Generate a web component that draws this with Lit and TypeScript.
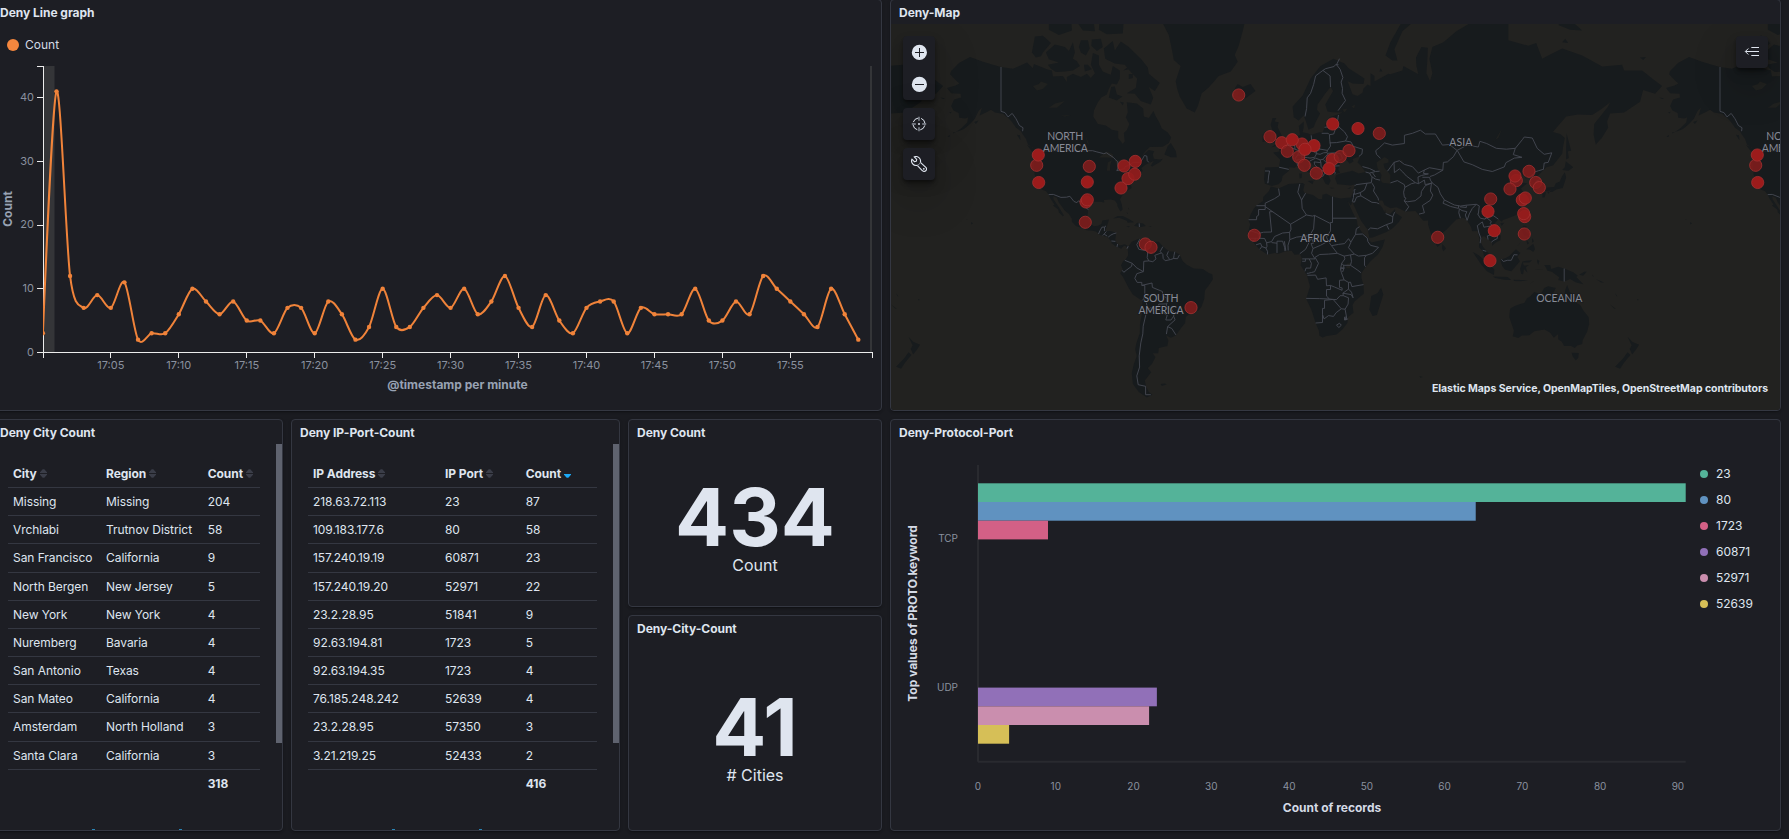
import { LitElement, html, css, svg } from "lit";
import { customElement, property } from "lit/decorators.js";

const FONT = css`Inter, "Open Sans", "Liberation Sans", sans-serif`;

/* ---------- Panel frame ---------- */

@customElement("dash-panel")
class DashPanel extends LitElement {
  @property() heading = "";
  static styles = css`
    :host {
      display: flex;
      flex-direction: column;
      box-sizing: border-box;
      min-width: 0;
      min-height: 0;
      overflow: hidden;
      background: #1d1e24;
      border: 1px solid #343741;
      border-radius: 4px;
      box-shadow: 0 2px 2px -1px rgba(0, 0, 0, 0.3), 0 1px 5px -2px rgba(0, 0, 0, 0.3);
    }
    .title {
      flex: none;
      box-sizing: border-box;
      height: 24px;
      padding: 1px 8px 0;
      font-size: 12px;
      font-weight: 700;
      line-height: 24px;
      letter-spacing: -0.03px;
      color: #dfe5ef;
      white-space: nowrap;
    }
    .body {
      flex: 1;
      min-height: 0;
      display: flex;
      flex-direction: column;
      overflow: hidden;
    }
  `;
  render() {
    return html`<div class="title">${this.heading}</div>
      <div class="body"><slot></slot></div>`;
  }
}

/* ---------- Line chart ---------- */

const COUNTS = [
  3, 41, 12, 7, 9, 7, 11, 2, 3, 3, 6, 10, 8, 6, 8, 5, 5, 3, 7, 7, 3, 8, 6, 2, 4, 10, 4, 4, 7, 9, 7,
  10, 6, 8, 12, 7, 4, 9, 5, 3, 7, 8, 8, 3, 7, 6, 6, 6, 10, 5, 5, 8, 6, 12, 10, 8, 6, 4, 10, 6, 2,
];

@customElement("line-chart")
class LineChart extends LitElement {
  static styles = css`
    :host { display: flex; flex-direction: column; flex: 1; }
    .legend {
      display: flex;
      align-items: center;
      gap: 6px;
      height: 27px;
      padding: 7px 0 0 15px;
      font-size: 12px;
      color: #d4dae5;
    }
    .dot { width: 12px; height: 12px; border-radius: 50%; background: #f5873e; }
    svg { display: block; width: 889px; height: 352px; }
    .tick { font-size: 11px; fill: #8a919f; }
    .axis-title { font-size: 12px; font-weight: 700; fill: #98a2b3; text-anchor: middle; }
    .mid { text-anchor: middle; }
    .end { text-anchor: end; }
    .axis { fill: none; stroke: #ececec; shape-rendering: crispEdges; }
    .series { fill: none; stroke: #f0833a; stroke-width: 2; }
    .point { fill: #f0833a; }
    .edge { fill: #343538; }
  `;
  private x = (i: number) => 42.9 + i * 13.59;
  private y = (v: number) => 352.4 - v * 6.367;

  private path() {
    const p = COUNTS.map((v, i) => [this.x(i), this.y(v)]);
    const a = 0.15;
    const t = p.map((_, i) =>
      i === 0 || i === p.length - 1
        ? [0, 0]
        : [a * (p[i + 1][0] - p[i - 1][0]), a * (p[i + 1][1] - p[i - 1][1])]
    );
    let d = `M${p[0]}`;
    for (let i = 1; i < p.length; i++) {
      const c1 = [p[i - 1][0] + t[i - 1][0], p[i - 1][1] + t[i - 1][1]];
      const c2 = [p[i][0] - t[i][0], p[i][1] - t[i][1]];
      d += `C${c1} ${c2} ${p[i]}`;
    }
    return d;
  }

  render() {
    const yTicks = [0, 10, 20, 30, 40];
    const xTicks = Array.from({ length: 11 }, (_, i) => (i + 1) * 5);
    const axis =
      "M37 66.5H43.5V358M37 352.5H872.5V358" +
      yTicks.map((v) => `M37 ${Math.floor(this.y(v)) + 0.5}H43`).join("") +
      xTicks.map((m) => `M${Math.floor(this.x(m)) + 0.5} 353V358`).join("");
    return html`
      <div class="legend"><span class="dot"></span>Count</div>
      <svg viewBox="-8 58 889 352">
        <clipPath id="plot"><rect x="43" y="60" width="829" height="298" /></clipPath>
        <rect class="edge" x="44" y="66" width="10.5" height="286" />
        <rect class="edge" x="870" y="66" width="2" height="286" />
        <path class="axis" d=${axis} />
        <g clip-path="url(#plot)">
          <path class="series" d=${this.path()} />
          ${COUNTS.map((v, i) => svg`<circle class="point" cx=${this.x(i)} cy=${this.y(v)} r="2.2" />`)}
        </g>
        ${yTicks.map((v) => svg`<text class="tick end" x="34" y=${this.y(v) + 3.2}>${v}</text>`)}
        ${xTicks.map(
          (m) => svg`<text class="tick mid" x=${this.x(m)} y="369">17:${String(m).padStart(2, "0")}</text>`
        )}
        <text class="axis-title" x="457.5" y="389">@timestamp per minute</text>
        <text class="axis-title" transform="translate(12 209) rotate(-90)">Count</text>
      </svg>
    `;
  }
}

/* ---------- World map ---------- */

const WORLD = 719;
const R = WORLD / (2 * Math.PI);
const px = (lon: number) => 1282.6 + (lon * WORLD) / 360;
const py = (lat: number) => 263.3 - R * Math.log(Math.tan(Math.PI / 4 + (lat * Math.PI) / 360));
const trace = (s: string, close: boolean) =>
  "M" +
  s
    .trim()
    .split(/\s+/)
    .map((c) => {
      const [lon, lat] = c.split(",").map(Number);
      return `${px(lon).toFixed(1)} ${py(lat).toFixed(1)}`;
    })
    .join("L") +
  (close ? "Z" : "");

const LAND = [
  // North America
  `-141,69.6 -145,70 -150,70.5 -156.5,71.3 -162,70.3 -166,68.9 -166.5,68.3 -163.5,67.1 -161.8,66.5 -163.8,66.1
  -168,65.6 -166,64.5 -161.2,64.4 -161,63.6 -164.5,63.1 -166,61.6 -164.8,60.5 -162.2,59.9 -161.9,58.7 -158.8,58.5
  -157.5,58.8 -157.8,57.5 -160.5,56 -163,55 -165,54.3 -165,54.6 -162,55.1 -159.5,55.6 -156.5,57 -154,58.5
  -153.3,59.3 -152,60.6 -150.5,61.2 -151.7,59.3 -148.5,60 -146,60.7 -144,60 -140,59.7 -137,58.4 -135.5,57.6
  -133.5,56 -131,55 -130,54 -128.5,52.8 -127.5,51 -124,49.4 -122.7,49 -122.4,47.5 -124.7,48.3 -124.1,46.2
  -124.5,42.8 -124.1,40.5 -123,38.3 -121.9,36.7 -120.6,34.6 -118.4,33.9 -117.2,32.6 -116,30.5 -114.2,28.2 -115,27.8
  -112.3,26 -112,24.6 -110,22.9 -109.5,23.3 -111,25.5 -112.6,27.8 -114.7,30.5 -114.8,31.8 -113,31.2 -112,29
  -110.5,27.3 -109.3,25.8 -107,24 -105.5,21.8 -105.5,20.4 -103.5,18.3 -101,17.5 -98,16.3 -95,16.1 -93.5,15.7
  -91.5,14 -88,13.2 -87.5,12.8 -85.8,11 -85.6,10 -83.6,8.5 -82.5,8.2 -80.8,7.3 -80,8.3 -78.9,8.9 -78,8 -77.5,7
  -76.8,8.3 -79,9.5 -81.5,8.9 -83,10 -83.8,11.5 -83.4,14.5 -83.2,15.1 -86,15.9 -88.8,15.8 -88.2,17.5 -87.5,19.5
  -86.9,21.4 -90.3,21 -90.7,19.3 -92.5,18.5 -94.5,18.2 -96,19.2 -97.4,21 -97.8,22.8 -97.3,26 -97,28 -94.7,29.4
  -91.5,29.4 -89.2,29.1 -89.5,30.2 -86,30.4 -84,30 -82.7,28.5 -82.7,27.5 -81.8,26 -81,25.2 -80.1,26 -80.5,28.2
  -81.4,30.5 -80,32.5 -77.9,34 -75.6,35.3 -76,37 -75,38.5 -74,40.5 -71,41.5 -70,41.8 -70.8,43 -68.5,44.3
  -66.5,44.9 -64.5,45.6 -66,43.8 -65.3,43.5 -61,45.3 -60,46.3 -61.5,46 -64.5,46.3 -65,47.8 -64.3,48.8 -67,49.2
  -69.8,47.6 -71,46.9 -68.5,49 -66.5,50.2 -60,50.3 -57,51.5 -55.8,53.2 -57.5,54.6 -60.5,55.8 -61.8,57.5
  -63.5,59 -64.7,60.4 -67,58.6 -69.5,59 -69.8,61 -73,62.2 -78,62.5 -77.5,60 -78.5,58.8 -76.7,57 -78,55.3
  -79.5,54.5 -79,52 -80,51.2 -82.3,53 -82.3,55.1 -85.5,55.4 -88.5,56.6 -92.5,57 -94.8,59 -94.5,60.5 -92.5,62.5
  -90.8,63.6 -88,64.2 -87,65.4 -85.5,66.5 -83,66.3 -81.5,67.5 -81.5,69 -85,69.8 -86,68.2 -88,68.5 -90,68.8 -92,70
  -92,71.5 -95,71.9 -96,70 -94,68.5 -96,67.6 -98,68.4 -101,67.8 -105,68.4 -108,67.8 -108,66.8 -110,68 -115,67.9 -115.5,69 -118,69.2 -122,69.8 -124.5,70.1 -125,69.4 -128,70.4
  -131,69.9 -135,69.3`,
  `-105,73.5 -107,72.2 -109,72.8 -114,73.2 -118.5,72 -117,70.9 -112,70.4 -117.5,70 -116,69.3 -113.5,68.7 -109,68.8 -105,69 -101.5,69.8 -103,70.6 -105,71 -104,72`,
  `-125.5,72 -124,74.3 -120,74.4 -116,73.4 -120,72 -121,71.4 -123.5,71.2`,
  `-102,72.8 -101,73.8 -97.5,73.8 -96.6,72.6 -98.5,71.5 -101,72`, `-95.5,73.9 -91,74 -90,72.8 -93,72.2 -95.8,73`,
  `-99.5,70 -97.5,70 -95.5,69.2 -99,68.8`,
  `-61.5,66.6 -64,65 -67,65.8 -64.8,63.5 -66,62 -71,62.8 -74,64.4 -78,64.5 -73.5,65.6 -72.8,67.5 -76,68.7 -79,70
  -84,70.2 -88.8,71 -89.5,72.6 -85,73.7 -84,72.3 -81,73.6 -77,72.8 -71,71 -67.5,69.5 -67,68.4`,
  `-80,74.7 -88,74.6 -92,75.2 -91.5,77 -79.5,76.5`, `-105.5,75.1 -112,74.5 -117,75.2 -117,77 -106,77`,
  `-94,75 -100,75.1 -104,76.5 -104,77 -95,77`, `-80.2,63.8 -83,64.2 -84,65.9 -85.8,65.8 -87,63.6 -83,62.9`, `-79.5,62.4 -81.5,62.6 -80,61.8`,
  `-75,67.6 -77,67.4 -77,68.3 -75,68.4`, `-79.8,69 -77.5,69.6 -77,69.2`, `-59.2,47.7 -56,46.8 -53,46.8 -53.4,48.8 -56,51.5 -57.5,50.5`,
  `-128,50.8 -125,50 -123.4,48.5 -125.5,48.8`, `-133,54 -131.5,53.8 -131.3,52.3`, `-154.5,57.6 -152.3,58 -153.5,57`,
  `-167.8,53.4 -166.5,54 -166.8,53.3`, `-167,60 -165.8,60.2 -166.2,59.8`, `-171.5,63.6 -169,63.4 -170,63.2`,
  `-84.9,21.9 -82.5,23 -80,23 -77,21.6 -74.3,20.1 -77.5,19.9 -78,20.8 -81.8,22.2`,
  `-74.4,18.5 -72.8,19.9 -69.8,19.6 -68.5,18.4 -71.5,17.8`, `-78.2,18.4 -76.3,18.1 -77.3,17.8`,
  `-67.2,18.4 -65.7,18.4 -66,18`, `-78,25 -77.5,24 -77.8,23.9`, `-77.2,26.8 -76.8,25.9 -77.5,26.6`,
  `-156,20.3 -155,19.5 -155.8,19`, `-158.2,21.6 -157.8,21.3 -158.1,21.3`,
  // Greenland and Iceland
  `-73,78 -68,76 -60,76 -57,74.5 -55.5,72.5 -54.5,70.8 -51,69.8 -53.5,67 -52.8,65.5 -51.5,63.8 -48,61 -44,60 -42.5,61.5
  -40.5,64.5 -37,65.7 -32,68 -26,68.8 -22.5,70.5 -24,71.6 -22,73 -20,75 -18,77`,
  `-24,65.5 -22.5,66.4 -20,65.8 -16,66.4 -13.6,65 -18.5,63.4 -22.5,63.9 -21.8,64.7`,
  // South America
  `-77.5,8 -75.5,10.7 -72,12.2 -71.5,10.9 -70,12 -68.2,10.6 -62,10.7 -60,8.5 -57,6 -54,5.8 -51.5,4.3 -50,1.2
  -48,-0.7 -44.5,-2.6 -40,-2.9 -37,-4.8 -35.2,-5.5 -34.9,-8 -37,-11 -38.9,-13.5 -39.2,-17.5 -40.5,-21 -42,-23
  -45,-23.5 -48.5,-26 -48.8,-28.6 -51,-31 -53.5,-34 -56,-34.9 -58.3,-34 -57.2,-36 -57.7,-38.2 -62,-39 -62.3,-41
  -65,-41 -63.7,-42.5 -65.5,-45 -67.5,-46.3 -65.8,-47.8 -69,-50.5 -68.4,-52.3 -67,-54 -65.2,-54.8 -68,-55.6
  -72,-54 -75,-51.5 -75.5,-48 -74.5,-45 -73,-42 -73.8,-39.5 -73.2,-37 -71.5,-33 -71.4,-29 -70.3,-24 -70.2,-18.5
  -75,-15.5 -77.2,-12 -79.8,-7 -81.3,-5 -80,-3 -80.9,-1 -80,0.8 -78.5,2 -77.3,4 -77.5,7`,
  `-61,-51.6 -59,-51.4 -58,-51.7 -60.5,-52.2`,
  // Africa
  `-5.9,35.8 -2,35.1 3,36.9 10,37.3 11,36.8 10.3,34.3 11,33.2 15.2,32.3 18,30.6 19.8,30.6 20,32.4 22,32.9 25,31.6 29,30.9
  32.3,31.2 34.2,31.3 34.9,29.5 34.2,27.8 32.6,29.8 33.8,27.2 35.5,24 37.2,21 37.5,18.8 39.5,15.6 43.2,12.2
  43.2,11.5 44.5,10.4 51.2,11.9 50,8 47.8,4.5 44,1 41.5,-2 39.5,-4.8 39.5,-7.5 40.5,-10.7 40.7,-15 36,-18.8
  35,-20.5 35.5,-24 32.8,-26 32.5,-28.5 30,-31.3 27,-33.6 22,-34.2 20,-34.8 18.4,-34 18.2,-32 16.5,-28.6
  14.5,-22.9 11.8,-17.5 13.7,-11.5 12.2,-6 9,-1 9.6,2.5 8.8,4.5 6,4.3 4.5,6.3 1,5.9 -2,4.8 -4,5.2 -7.7,4.4
  -11.5,6.9 -13.3,9 -16.7,12.4 -17.4,14.7 -16.2,19 -17,21 -16,23.7 -14.5,26.2 -12.9,27.9 -9.8,29.8 -9.7,31.5 -6.8,34`,
  `49.3,-12 50.4,-15.5 47.2,-25 45,-25.5 43.4,-22.5 44.4,-16.2 47.5,-14.8`,
  // Eurasia
  `-9.3,38.8 -8.8,43.2 -1.8,43.4 -1.2,46 -4.7,48.4 -1.5,48.7 -1.8,49.7 1.5,50.2 2,51 4.5,52.3 7,53.4 8.7,54
  8.1,56.5 10.6,57.7 10.5,56 10,54.7 12.5,54.4 14.2,53.9 18.5,54.7 20,54.6 21,56 21.7,57.5 24.3,57.2 23.5,58.8
  28,59.6 30,60 25,60.1 22.5,60.3 21.4,62 25.3,65 24,65.8 21.5,64.5 17.5,62 17.2,60.7 18.8,59.8 16.5,57.5
  15.5,56.1 13,55.4 11.2,58.5 10.5,59.3 8,58 5.6,58.8 5,61.5 10,64 14,67.5 19,69.8 25.5,71 31,70.2 33,69.4
  41,67.5 40.5,66.4 35,66.5 32.5,67 35,64.3 37.5,63.9 40,64.6 40.5,65.5 42.5,66.3 44,66 44,68.5 46,68 46,66.9
  53,68.4 54,68.3 60,69 60.5,69.8 68,68.3 67,69.8 66.8,71.2 69.5,72.8 72.7,72.7 72.5,71 72,68.5 73.8,67
  75,68.5 73.5,71 75,72.8 80.5,73.5 87,75 98,76.6 104,78 113,76.3 113,73.8 123,73 127,73.4 130,71 133,71.5 140,72.6
  150,71.5 160,69.7 170,70 171,69 180,69 186,67.2 190,66 186.5,64.4 180.5,65.2 179,62.6 171,60 164,59.8 162.5,57.7
  163,56 159.8,53 156.8,51 155.7,54 156,57 163,61.5 164,62.5 160,61 155,59.4 148,59.5 142,59 135.3,54.8
  139,54.2 141.3,53 140.5,50.5 140,48 135.5,44 132,43.2 130.7,42.3 127.5,39.8 129.4,37 129,35.2 126.4,34.5
  126.7,37.5 125,38 125,39.6 121.7,39 121,40.8 118,39 119,37.4 122.5,37.2 119.3,35 121.8,31.8 121.9,29.5
  119.5,25.8 117,23.5 113.5,22.2 110.3,21.2 109.8,20.4 108,21.6 105.8,19 107,16.8 109.2,13.5 109,11.5
  106.7,10.3 104.8,8.7 105,10.2 102.5,12.2 101,13.4 100,13.3 99.2,10.5 100.3,8.3 103.3,4.8 104.2,1.4
  103.4,1.4 101,3 100.3,6 98.3,8 98.6,12 97.6,16 95,15.8 94.3,18 92,21.5 90.3,22.2 87,21.4 85,19.6 82,16.6
  80.2,15.3 80,12 79.8,10.3 78.1,8.6 77.5,8.1 76.2,10.5 74.5,14 72.8,19 72.8,21 70.5,20.8 69,22.3 68,23.7
  66.5,25.3 61.5,25.1 57,27 54,26.6 51,28 50,30 48,30 48.5,28.5 50.1,26.5 51,24.6 51.3,26 51.6,24.3 54,24.1
  56.3,26.2 56.5,24.5 59.8,22.5 58,20 55.3,17.4 52,15.5 45,12.8 43.4,12.7 42.7,16.5 39.2,21 37.2,24.8
  34.9,29.4 34.2,31.3 35.1,33 36,36 36.2,36.8 34,36.3 30.6,36.6 27.4,36.8 26.3,39 26.8,40.4 29,41 31.5,41.3
  35,42 38,41 41.5,41.5 39,44 37.5,45 39,47.2 35,46.2 35.5,45.3 33.6,44.5 32.5,45.5 31,46.6 28.7,44.5 27.8,42.5
  28.8,41.2 26.2,40.8 23,40.4 24,38 23,36.5 21.5,37 19.5,40 19.5,41.8 15,44.3 13.7,45.5 12.3,45.2 12.5,44
  14,42.3 18.5,40.1 16.8,40.4 17,39 15.8,38 16,39.8 12.5,41.6 10.3,43.6 8.7,44.4 6,43.1 3.3,43.3 3.2,42 0,40
  -.5,38 -2,36.8 -5.4,36.1 -8.9,37`,
  `-5.5,50.1 1.3,51.2 1.6,52.7 0.2,53 -1.5,55 -2.5,56.2 -2,57.5 -4,57.7 -3.2,58.6 -5,58.6 -6,56.8 -4.8,54.8 -3,54 -4.5,53 -5,51.8 -3,51.4`,
  `-10,51.8 -6.3,52.2 -6,54.5 -7.5,55.3 -10,54`,
  `12.5,38 15.5,38.2 15,36.8`, `8.3,41 9.7,41 9.5,39.2 8.5,39`, `9,42.8 9.5,42 9,41.5`, `23.5,35.5 26.2,35.2 24.5,35`, `32.4,35 34.4,35.6 33.8,34.9`,
  `51.5,71.5 55,70.7 57.5,70.7 56,72.5 60,75 68.5,76.8 60,76.3 54,73.5`, `49,69.4 50,68.8 48.5,68.8`, `138,75.8 144,75.2 150,75.1 146,76 140,76.2`,
  `140,73.5 143,73.4 141.5,74`, `179,71.2 182,71.3 180.5,70.8`, `68.5,-49 70.2,-49.4 69,-49.6`,
  `142.2,54.3 143.2,52 144.5,49 142.8,48.8 143.3,46.5 142,46 142,50`,
  `130.9,34 135,33.6 137,34.6 140.3,35.3 142,39.5 141.3,41.4 140,40 138.8,37.8 136.8,37.2 136,35.6 132.5,35.5`,
  `140,42.3 143.2,42 145.5,43.3 141.8,45.4 141.3,43.3`, `130,33.5 131.8,33.5 131.3,31.4 130.2,31.3`, `132.5,34 134.5,34.2 133,32.9`,
  `121.5,25.2 121,22 120.1,23.5`, `109,19.8 111,19.9 109.6,18.3`, `80,9.6 81.8,7.5 80.5,6 79.8,7.5`,
  `120.3,18.5 122.2,18.4 121.5,15.8 124,13 121,13.8 120,16`, `125,12.5 125.8,11 124.8,10.2`, `122,11.8 123.4,10 122.5,9.3`,
  `122,7 124,8.6 125.5,9.7 126.4,7 125.4,5.7 124,6.8`, `119.5,11 117.5,8.5 118.5,9.6`,
  `109,1.8 111.5,2.5 113.5,3.6 116.8,7 119,5.2 117.5,3.2 118.8,1 116.3,-2 114.5,-4 111.5,-3.2 110,-1.5`,
  `95.3,5.6 98,4.2 100.5,2 103.5,-1 106,-3 105.8,-5.8 102.3,-4 99,0 97,3`, `105.2,-6.6 108.5,-6.7 112.7,-6.9 114.5,-8.4 111,-8.2 106.5,-7.4`,
  `115.5,-8.2 119,-8.4 122.8,-8.4 119,-9 116,-8.9`, `123.5,-10.2 127,-8.4 125,-9.4`,
  `120,0.8 121,1.2 125,1.5 123.5,.4 120.2,.4 120.8,-1.2 123.3,-.9 121.8,-2 122.5,-4.6 120.8,-2.8 120.4,-5.5 119.5,-5.4 118.9,-2.8`,
  `127.6,2 128.6,1.2 128,-.8 127.4,1`, `126.2,-3.2 130.6,-3.1 128,-3.4`,
  `131,-.8 134,-.8 134.5,-2.9 138,-1.7 141,-2.6 145.5,-4.5 147.8,-6.2 147,-6.8 150.6,-10.4 147,-9.6 144,-7.8 141,-9.1 138,-8.3 138.5,-7 135,-4.4 132.5,-3.6 132,-2.3`,
  `148.5,-5.7 151,-4.2 152.2,-4.2 150.5,-6.2`, `154.8,-5.5 156,-6.8 155.2,-6.4`, `157,-8 161,-9.6 159.5,-9.6`, `164,-20.2 167,-22.3 166,-22`,
  `166.7,-15 167.6,-16.4 167,-16`, `177.4,-17.6 178.5,-18 177.5,-18.2`,
  `114,-22 116.5,-20.8 119,-20 121,-19.5 122.3,-17.3 124,-16.3 126,-14.2 128,-14.8 129.5,-14.9 131,-12.3 133,-11.4 136.8,-12.2
  135.5,-14.8 139,-17.4 141,-17 141.6,-13 142.5,-10.8 143.8,-14.3 145.3,-15 146.3,-19 149,-20.5 150.8,-23.3
  153.2,-26 153.5,-29 152.5,-32.3 150.2,-36 150,-37.4 147.5,-38 146.3,-39 144.5,-38.2 141,-38.2 139.8,-36.5 138,-35.5 138,-33.4
  135.8,-34.9 134,-32.8 131.2,-31.5 126,-32.2 123.5,-33.9 119.8,-34 118,-35 115.2,-34.3 115.8,-32 113.5,-26 113.8,-23`,
  `144.7,-40.8 148.3,-40.9 148,-42.8 146.8,-43.6 145.3,-42.3`,
  `172.7,-34.5 175,-36.5 178.5,-37.7 176.8,-39.8 175,-41.5 173.8,-39.3 174.8,-38`,
  `172.7,-40.6 174.2,-41.7 171.2,-44.2 169,-46.6 166.5,-45.9 170.5,-43`,
];

const WATER = [
  `47,45 51,46.9 53,46 53,45 50.5,44.5 51,43 52.8,41.5 54,40.5 53.8,37 50,37.4 49,38.5 49.5,40.4 47.5,43`,
  `-125,66 -122,66.4 -121,66.9 -117.5,66.4 -120,65.4 -123,65.1`, `-117,61.2 -114,62.2 -109,62.8 -113,61.2`, `-111,59.2 -106,59.4 -109,59`,
  `-98.5,53.5 -97.5,52 -96.8,50.6 -98,51.8`, `-92,46.7 -88,48.7 -85,47.8 -84.7,46.5 -88,46.7`, `-88,42 -86.4,42 -86.3,44 -85.5,45.8 -87.5,45`,
  `-84,45.9 -80.5,45.8 -80.3,44.6 -81.7,43.3 -83,44`, `-83,41.7 -79,42.8 -81.5,41.7`, `-79.7,43.4 -76.4,44 -77,43.3`,
  `104,51.6 108,53 109.8,55.6 106.5,52.4`, `58.5,45.5 60,46 60,44.5`, `32,-.2 34,.2 33.8,-2.5 31.8,-2.5`, `30,60.8 32.5,61 31,60`, `34.5,61.5 36.3,62 35.8,61`,
];

const BORDERS = [
  // Americas
  `-141,69.6 -141,60.3 -139,60 -137.5,58.9 -135.4,59.8 -133.5,58.4 -131.8,56.6 -130,56 -130.2,55`,
  `-122.8,49 -95.2,49 -93,48.6 -89.5,48 -88.2,48.3 -84.8,46.8 -83.5,45.9 -82.5,45.2 -82.4,43 -83,42 -79,42.8 -79,43.4 -76.5,44.2 -74.8,45 -71.5,45 -70.3,46 -69.2,47.4 -68,47.2 -67.8,45.7 -67,45`,
  `-117.1,32.5 -114.8,32.6 -111,31.3 -108.2,31.4 -106.5,31.8 -104.5,29.6 -103,29 -102.3,29.8 -101,29.4 -99.5,27.5 -97.2,25.9`,
  `-92.2,14.5 -91.5,16 -90.5,17.8 -89.1,17.9 -88.4,18.4`, `-89.1,17.9 -89.2,15.9`, `-90,13.8 -89.3,14.5 -88.2,15.7`, `-89.3,14.4 -87.8,13.5`,
  `-87.3,13 -86,14 -84.5,14.7 -83.2,15`, `-85.7,11.1 -83.7,10.9`, `-82.9,8.2 -82.6,9.6`, `-77.9,7.3 -77.3,8.6`, `-71.8,19.6 -71.7,17.9`,
  `-71.5,12 -73,9.3 -72,7 -67.5,6.2 -67.8,2.8 -67,1.2 -69.5,1 -69.7,-4.2 -73,-2.3 -75.3,0 -79,1.5`, `-75.3,0 -75.6,-1.5 -78.3,-3.5 -79.5,-4.5 -80.3,-3.5`,
  `-69.9,-4.2 -73,-5.2 -74,-7.5 -72.8,-9.5 -70.5,-9.5 -70.5,-11 -69,-11 -69,-15 -69.5,-17.5 -70.3,-18.3`, `-70.5,-11 -65.4,-9.8 -65.2,-12 -60.2,-14 -60,-16.2 -58,-17 -57.8,-19.5 -58.2,-20`,
  `-69.5,-17.5 -68.2,-19.5 -67.5,-22.8 -66.2,-21.8 -62.7,-22.2 -62,-20 -58.2,-19.9 -57.9,-22 -55.5,-22.5 -54.3,-24.2 -54.6,-25.6 -55.9,-27.3 -58.5,-27.3 -57.8,-25.2 -62.7,-22.2`,
  `-67.5,-22.8 -68.5,-25 -69.8,-30 -70,-33.3 -71,-37 -71.8,-42 -71.6,-46 -73,-49 -72.3,-51.8 -68.6,-52.3 -68.6,-54.8 -66,-54.8`, `-54.6,-25.6 -53.8,-27.2 -57.6,-30.2 -58.2,-33.4`, `-57.6,-30.2 -55.5,-31 -53.4,-33.7`,
  `-67,1.2 -65,.8 -63.4,2.2 -64,4 -60.7,5.2 -61.3,5.9 -60,8.3`, `-60.7,5.2 -60,4.5 -59.8,2.4 -58.8,1.3 -56,1.9 -54.6,2.4 -52.6,2.3 -51.6,4.2`, `-57.2,6 -58,4 -56.6,1.9`, `-54,5.8 -54.4,4 -54.6,2.4`,
  // Europe
  `28.5,71 27,70 28.8,69.2 30.2,67.7 29.3,66.8 30,65.5 29.8,64.5 31.5,62.9 27.8,60.5`, `11.2,59 12,61 12.3,63.5 14,64.5 15.5,66.3 16.5,68 20.2,69 23.8,68 24,65.8`, `20.2,69 21.5,69.3 25.8,69.7 26.5,70 28,70`,
  `-8.8,41.9 -6.5,41.9 -7,40 -7.2,38.2 -7.4,37.2`, `-1.8,43.3 3.1,42.5`, `2.6,51 4,50 6.2,49.5 8.2,49 7.6,47.6 6.2,46.3 7,45.8 7.5,43.8`, `4,51.3 6,50.8 6.2,49.5`, `7,53.3 6.8,52 6,50.8`,
  `7.6,47.6 9.6,47.5 9.5,46.8 10.5,46.8 8.5,46 7,45.8`, `9.6,47.5 13,47.7 13.8,48.7 12.2,50.3 14.8,51 14.3,53.8`, `10.5,46.8 12.4,46.7 13.7,46.5 16,46.8 17,48 15,49 13.8,48.7`, `14.8,51 17,50.2 19,49.5 17,48.8 17,48`,
  `19,49.5 22.5,49.1 22.2,48.4 20.5,48.3 18.8,47.8 17,48`, `22.5,49.1 24,50.5 23.6,52.6 23.5,54 22.8,54.4 19.6,54.4`, `21,56.1 24,56.3 26.5,55.7 25.6,54.2 23.5,54`, `26.5,55.7 28.2,56.2 27.4,57.5 24.4,57.9`, `27.4,57.5 28,59.4`,
  `28.2,56.2 31,54.8 32.5,53.4 31.5,52.1 27,51.6 23.6,51.5`, `31.5,52.1 34.2,51.8 35.5,50.4 40,49.5 39.7,47.9 38.2,47.1`, `22.2,48.1 26.5,48.3 29,48 30,46.4 28.2,45.5`, `26.6,48.3 28.2,46.4 28.2,45.4`,
  `13.6,45.5 16.5,46.5 18.8,45.9 19.2,44.9 15.8,45.2 16,44.2 18.4,42.5`, `18.8,45.9 20.3,46.1 22.8,48`, `20.3,46.1 22.5,44.5 22.5,42.4 20.5,42 19.4,41.9`, `22.6,43.7 25.5,43.7 28.5,43.8`, `19.2,44.9 19.3,43.5 20.3,42.8 21,42.3 21,41 22.9,41.3 26.2,41.6 26.4,41 26,40.8`, `21,41 20,39.7`,
  `41.5,41.5 43.5,41.1 46.5,41.7 48.5,41.8`, `43.5,41.1 44.5,39.8 46.5,38.8 48.8,38.4`, `40,43.5 43.5,42.8 46.3,41.8`, `44.8,39.7 44.4,37.4 42.3,37.2 36.7,36.6 36,36`, `45,41.2 46.5,39.6`,
  // Asia
  `42.3,37.2 41,34.4 38.8,33.3 36,32.6 35.8,34.5 36.5,34.6`, `38.8,33.3 39.2,32 37,31.4 36,29.3 35,29.4`, `39.2,32 44.7,29.2 47,29 48.4,28.5`, `44.8,37.2 46,35.5 45.5,34 47.8,31 48,30`, `35.5,33 35.5,31.3 34.9,29.5`,
  `42.8,16.4 44,17.4 47.5,17 52,19 53.2,16.7`, `52,19 55,20 55.2,22.7 51.6,24.2`, `55.2,22.7 56,24.6 56.4,24.9`,
  `54,37.3 57.5,38.2 61,36.6 61.2,35.5 60.6,33.5 61,31.3 61.8,31 60.9,29.8 63.2,27.2 61.6,25.2`, `61.2,35.5 64.5,37 66.5,37.4 68,37 71,38.4 71.4,36.6 74.9,37.3 71.5,36.2 69.5,33.8 69.3,31.9 66.4,29.9 62.5,29.4 60.9,29.8`,
  `52.5,41.8 55.8,45 56,41.3 58.5,42.7 60.2,41.5 62,40 66.5,37.4`, `55.8,45 58.5,45.6 61,44.3 65,43.5 68,41.1 70.8,42.2 73.5,43.1 80.2,42.2`, `71,42.2 70.5,41 73,40.8 69.5,40.2 67.8,39.6 68,37`, `70,39.5 73.6,39.5 74,38.4 74.9,37.3`, `73.8,39.8 76,40.4 80.2,42.2`,
  `49,46.4 47,47.8 46.6,49 48.5,50 51,51.5 55,50.8 61,51.3 61,53.8 65,54.4 69,55.3 71.5,54.2 76.5,54.2 80,50.8 83.5,51 87.3,49.1 85.5,47 82.5,45.2 80.5,45 80.2,42.2`,
  `87.3,49.1 92.5,50.8 98,50.2 98.8,52 102.2,51.3 107,49.8 112,49.5 116.5,49.8 115.5,47.7 119.8,46.8 116,46.5 111.8,44.9 111,43.4 105,41.7 100,42.5 95,44.2 90.8,45.2 87.5,49`,
  `116.5,49.8 120,52.5 121,53.3 125,53 127.5,49.8 131,47.8 134.8,48.3 133,45 131,44.8 130.6,42.4`, `124.4,40 126.5,41.6 128.2,42 130.5,42.5`, `126.7,37.8 128.4,38.5`,
  `74.9,37.3 77.8,35.5 79,32.8 81,30.2 86,28 89,27.5 92,27.9 97,28.3 98.5,27.6 98,24 97.7,24 99,22 101.2,21.6 103,22.6 105.5,23.2 108,21.6`, `74.5,37 74,34 75.2,32.3 73.9,30 70,27.8 71,24.5 68.3,23.9`, `81,30.2 80.3,28.8 84,27.4 88,26.5 88.1,27.8`, `88.8,27.2 92,26.9 92,27.8`,
  `89,22 88.2,24.5 88.5,26.3 89.8,25.5 92.3,25 91.5,23.5 92.4,21`, `92.4,21 93.5,24 95,26.5 97,28.3`, `98.9,10 99.3,12.5 98.3,15 97.5,18.5 100,20.3 100.8,17.8 102.2,18 104,18.3 105.5,15 105.2,14.2 102.5,13.6 102.9,11.8`, `101.2,21.6 102,22.4 104.5,20.5 104,19.5 107,16.5 107.5,14.4 107.5,12.3 105.8,11.5 104.5,10.5`, `105.2,14.2 107.5,14.4`, `100.2,6.5 102,6`,
  `109.6,2 110.5,.9 112.5,1.5 114.5,1.5 115.8,4.3 117.6,4.2`, `141,-2.6 141,-9.1`,
  // Africa
  `25,31.6 25,20 24,20 24,19.5 16,23.3 15,23 11.9,23.5 9.8,26.5 9.5,30.2 11.5,33.1`, `25,22 37,22`, `9.5,30.2 7.6,33.5 8.6,36.9`, `-2,35 -1.5,32.2 -4,30.8 -8.7,28.8 -8.7,27.3 4,19.2 11.9,23.5`,
  `-8.7,27.7 -13.1,27.7`, `-8.7,27.3 -8.7,26 -12,26 -12,23.4 -13,22.8 -13,21.3 -17,21.3`, `-5,25 -6.5,25 -5.5,15.5 -9.5,15.4 -12,14.8 -16.5,16.2`, `4,19.2 4.2,16.8 3.5,15.3 0,15 -4,13.3 -5.5,10.8 -8,10.2 -7.8,8.5 -8.3,7.6 -7.5,5.8 -7.6,4.4`,
  `3.5,15.3 3.6,11.8 7,13 13.5,13.7 15.5,17 16,23.3`, `3.6,11.8 2.7,9 2.8,6.4`, `0,11 1,8 1.2,6.1`, `0,11 -2.8,11 -2.8,5.2`, `-2.8,10 -5.5,10.3`, `.9,11 1.6,6.3`, `-12,14.8 -11.4,12.4 -16.7,12.4`, `-11.4,12.4 -9,12.3 -8,10.2`, `-13.3,9.2 -11,9.9 -10.4,8.4 -8.3,7.6`, `-10.4,8.4 -11.4,7`,
  `-13.7,12.6 -13.7,11.7 -15,10.9`, `13.5,13.7 14.5,12.5 13.5,11 11.5,7 8.6,4.8`, `14.2,13 15.5,10 14.2,9.8 15.2,7.4 14.5,5 16.2,2.2 13.3,2.2 9.8,2.2`, `15.2,7.4 19,9 22.8,11 22,13 24,16 24,19.5`, `22.8,11 24.5,8.8 27.4,5 23,4.6 18.6,4.4 16.2,3`,
  `24.5,8.8 28,9.4 31,9.8 33,12.2 34.2,10.5 33,7.8 35.9,4.6 34,4.2 30.8,3.6 27.4,5`, `36.5,14.3 34.2,10.6`, `38.5,18 36.9,17 36.5,14.3 40,14.5 42.4,12.5`, `42.4,12.5 42.7,10.8 44,9 48,8 45,5 41.9,4 38,3.6 35.9,4.6`, `41.9,4 41,2.8 41,-1 41.6,-1.7`,
  `34,4.2 34.5,1 34,-1 37.7,-3.5 39.2,-4.7`, `34,-1 30.5,-1 29.6,0 31.2,2.2 30.8,3.6`, `30.5,-1 30.8,-2.4 29,-2.8 29.4,-4.5 30.8,-8.3 33,-9.5 34,-9.4 34.7,-11.6 40.5,-10.6`, `29,-2.8 29.6,0`, `29.2,-2.2 30.8,-2.4 30,-4.4`,
  `30.8,-8.3 28.5,-8.5 28.5,-12 29.8,-12.2 29.8,-13.4 26,-11.8 24,-11 24,-13 22,-13 22,-16.2 23.5,-17.6 18.5,-17.4 11.8,-17.3`, `24,-11 22,-11.2 21.8,-7.3 17.5,-8 16.5,-5.9 12.4,-6`, `16.2,3 18,0 16,-4.2 14.4,-4.6 12.8,-5 12.1,-5`, `13.3,2.2 14.4,0 14,-2.4 11.7,-2.4 11.2,-4`, `11.4,2.2 11.4,1 9.8,1`,
  `33,-9.5 33,-12.8 34.5,-14.3 35.3,-17 34.3,-15.5 30.2,-14.8 30.4,-16 28.8,-16 27,-17.9 25.2,-17.8 23.5,-17.6`, `33,-12.8 30.2,-14.8`, `30.4,-16 33,-17 32.8,-20 31.3,-22.4 29.4,-22.2 25.3,-17.8`, `29.4,-22.2 26.8,-24 25.5,-25.7 23,-25.3 20.8,-26.8 20,-24.8 20,-28.4 16.5,-28.6`, `20,-24.8 20,-22 21,-22 21,-18.2 25.2,-17.8`,
  `31.3,-22.4 32,-26 31,-27.2 32.8,-26.8`, `27,-29.6 28.5,-28.7 29.4,-29.6 28.2,-30.6 27,-29.6`, `31,-26 32,-26 31.9,-27.2 31,-27.2 31,-26`,
];

const LAND_PATH = LAND.map((s) => trace(s, true)).join("");
const WATER_PATH = WATER.map((s) => trace(s, true)).join("");
const BORDER_PATH = BORDERS.map((s) => trace(s, false)).join("");

/* Source hits: x, y and density (0 single, 1 several, 2 many). */
const HITS: [number, number, number][] = [
  [1036.7, 165.3, 0], [1038.3, 155, 2], [1038.7, 182.5, 2], [1089.3, 166.4, 0], [1087.3, 182, 2], [1086, 202, 1],
  [1087.3, 199.8, 1], [1085.3, 222.3, 0], [1124, 166, 1], [1135.3, 161.4, 1], [1128, 178.6, 1], [1134.7, 174.2, 1],
  [1121, 188, 1], [1145.3, 244, 0], [1151, 247.3, 0], [1191, 307.6, 0],
  [1238.7, 95, 0], [1270, 136.7, 0], [1281.7, 142.7, 1], [1287.3, 151.3, 0], [1302, 144, 1], [1292.3, 139.7, 2],
  [1314, 145.6, 2], [1298.7, 157, 0], [1305, 149.3, 2], [1304.3, 165.3, 0], [1316.3, 173.2, 0], [1332.7, 124, 2],
  [1358, 128.5, 2], [1379.3, 133.4, 0], [1332.3, 159.6, 1], [1340.3, 156.6, 0], [1349, 150.6, 0], [1329, 168.7, 2],
  [1254.3, 235.3, 0], [1437.7, 237.3, 0],
  [1516.3, 180.6, 0], [1515, 176, 1], [1529, 171.3, 0], [1510, 189, 0], [1535.7, 182.5, 0], [1539.3, 187.6, 0],
  [1490.7, 199, 0], [1488, 211.4, 2], [1522.3, 200, 1], [1525.3, 198, 1], [1524.7, 216.6, 1], [1523.7, 213.6, 1],
  [1524.3, 234, 0], [1494.3, 230.7, 2], [1490, 260.7, 2],
];

const LABELS: [string, number, number, number][] = [
  ["NORTH", 1065.3, 139.7, 36], ["AMERICA", 1065.3, 152, 45], ["SOUTH", 1161, 301.7, 35], ["AMERICA", 1161, 314, 45],
  ["AFRICA", 1318.2, 241.6, 36], ["ASIA", 1460.8, 145.6, 23], ["OCEANIA", 1559.3, 302, 46],
];

const visible = (x: number, dx: number) => x + dx > 885 && x + dx < 1790;

@customElement("deny-map")
class DenyMap extends LitElement {
  static styles = css`
    :host { display: block; position: relative; flex: 1; }
    .canvas { display: block; width: 889px; height: 386px; background: #222220; }
    .land { fill: #171b1d; }
    .water { fill: #20211f; }
    .border { fill: none; stroke: #464a54; stroke-width: 0.9; stroke-linejoin: round; }
    .label {
      font-family: Lato, Inter, sans-serif;
      font-size: 10.5px;
      fill: #868a96;
      stroke: #1a1c1e;
      stroke-width: 1.5px;
      paint-order: stroke;
      text-anchor: middle;
    }
    .hit { stroke: #a83232; stroke-opacity: 0.75; stroke-width: 1; }
    .d0 { fill: #861c1c; fill-opacity: 0.85; }
    .d1 { fill: #951c1c; fill-opacity: 0.92; }
    .d2 { fill: #9c1b1b; }
    .controls { position: absolute; top: 12px; left: 12px; display: grid; gap: 8px; }
    .right { left: auto; right: 12px; }
    .group {
      display: grid;
      border-radius: 4px;
      background: #1d1e24;
      box-shadow: 0 6px 12px -1px rgba(0, 0, 0, 0.25), 0 4px 4px -1px rgba(0, 0, 0, 0.2), 0 2px 2px 0 rgba(0, 0, 0, 0.2), 0 16px 40px 8px rgba(0, 0, 0, 0.12);
    }
    .btn { display: grid; place-items: center; width: 32px; height: 32px; }
    .btn svg { width: 16px; height: 16px; display: block; }
    .solid { fill: #dfe5ef; }
    .cut { stroke: #1d1e24; fill: none; }
    .stroke { fill: none; stroke: #dfe5ef; }
    .faint { fill: none; stroke: #8f949e; }
    .credit {
      position: absolute;
      right: 12px;
      bottom: 13px;
      font-size: 10.5px;
      letter-spacing: -0.05px;
      line-height: 16px;
      font-weight: 700;
      color: #dfe5ef;
      white-space: nowrap;
    }
  `;
  render() {
    return html`
      <svg class="canvas" viewBox="891 24 889 386">
        ${[-WORLD, 0, WORLD].map(
          (dx) => svg`<g transform="translate(${dx} 0)">
            <path class="land" d=${LAND_PATH} />
            <path class="water" d=${WATER_PATH} />
            <path class="border" d=${BORDER_PATH} />
            ${LABELS.filter(([, x]) => visible(x, dx)).map(
              ([t, x, y, w]) => svg`<text class="label" x=${x} y=${y} textLength=${w}>${t}</text>`
            )}
            ${HITS.filter(([x]) => visible(x, dx)).map(
              ([x, y, d]) => svg`<circle class="hit d${d}" cx=${x} cy=${y} r="6.1" />`
            )}
          </g>`
        )}
      </svg>
      <div class="controls">
        <div class="group">
          <span class="btn"><svg viewBox="0 0 16 16"><circle class="solid" cx="8.4" cy="8.4" r="7.6" /><path class="cut" d="M8.500 4v9M4 8.500h9" /></svg></span>
          <span class="btn"><svg viewBox="0 0 16 16"><circle class="solid" cx="8.4" cy="8.4" r="7.6" /><path class="cut" d="M4 8.500h9" /></svg></span>
        </div>
        <div class="group">
          <span class="btn"><svg viewBox="0 0 16 16"><circle class="stroke" cx="8" cy="8" r="6" stroke-dasharray="6.4 3.02" stroke-dashoffset="-1.5" /><path class="faint" stroke-width="1.4" d="M8 .8v4M8 11.200v4M.8 8h4M11.200 8h4" /><circle class="solid" cx="8" cy="8" r="1" /></svg></span>
        </div>
        <div class="group">
          <span class="btn"><svg viewBox="0 0 16 16"><path class="stroke" stroke-width="1.15" stroke-linejoin="round" d="M3.200.9L5.700 3.300 5.300 5.200 3.400 5.700.9 3.200A4.600 4.600 0 0 0 6.200 9.400L11.300 14.700A2.400 2.400 0 0 0 14.800 11.300L9.400 6.300A4.600 4.600 0 0 0 3.200.9Z" /><path class="faint" d="M6.200 9.400A4.600 4.600 0 0 0 9.400 6.300" /><circle class="solid" cx="12.800" cy="12.800" r=".9" /></svg></span>
        </div>
      </div>
      <div class="controls right">
        <div class="group">
          <span class="btn"><svg viewBox="0 0 16 16"><path class="stroke" d="M7.300 3.500H15M1.500 7.500H15M7.300 11.500H15M4.300 4.500l-3 3 3 3" /></svg></span>
        </div>
      </div>
      <div class="credit">Elastic Maps Service, OpenMapTiles, OpenStreetMap contributors</div>
    `;
  }
}

/* ---------- Data tables ---------- */

@customElement("count-table")
class CountTable extends LitElement {
  @property({ attribute: false }) columns: string[] = [];
  @property({ attribute: false }) rows: (string | number)[][] = [];
  @property() total = "";
  @property() sorted = "";
  @property({ reflect: true }) kind = "city";
  static styles = css`
    :host { display: flex; flex: 1; min-height: 0; --cols: 93px 101.7px 1fr; }
    :host([kind="ip"]) { --cols: 132px 80.7px 1fr; }
    .content { flex: 1; display: flex; flex-direction: column; padding: 15.95px 16px 0; min-width: 0; }
    .row {
      flex: none;
      display: grid;
      grid-template-columns: var(--cols);
      align-items: center;
      box-sizing: border-box;
      height: 28.167px;
      padding-left: 5px;
      border-bottom: 1px solid #343741;
      font-size: 12px;
      letter-spacing: -0.06px;
      color: #dfe5ef;
      white-space: nowrap;
    }
    .head { font-weight: 700; }
    .foot { border-bottom: 0; font-weight: 700; }
    .foot span { grid-column: 3; }
    .head span { display: flex; align-items: center; gap: 3px; }
    .sort { flex: none; width: 7px; height: 9px; fill: #3a3d48; }
    .active { fill: #1ba9f5; }
    .bar { flex: none; width: 6px; height: 298.7px; background: #5f636f; }
    .pager { display: flex; gap: 84px; margin-top: auto; padding-left: 84px; }
    .pager i { width: 3px; height: 1px; background: #2a83b4; }
  `;
  render() {
    return html`
      <div class="content">
        <div class="row head">
          ${this.columns.map(
            (c) => html`<span
              >${c}${c === this.sorted
                ? html`<svg class="sort active" viewBox="0 0 7 9"><path d="M0 5h7v.8L4.300 8.800H2.700L0 5.800z" /></svg>`
                : html`<svg class="sort" viewBox="0 0 7 9"><path d="M0 4V3.200L2.700.2h1.600L7 3.200V4zM0 5h7v.8L4.300 8.800H2.700L0 5.800z" /></svg>`}</span
            >`
          )}
        </div>
        ${this.rows.map((r) => html`<div class="row">${r.map((c) => html`<span>${c}</span>`)}</div>`)}
        <div class="row foot"><span>${this.total}</span></div>
        <div class="pager"><i></i><i></i></div>
      </div>
      <div class="bar"></div>
    `;
  }
}

/* ---------- Metric ---------- */

@customElement("big-metric")
class BigMetric extends LitElement {
  @property() value = "";
  @property() label = "";
  static styles = css`
    :host { flex: 1; display: flex; flex-direction: column; align-items: center; justify-content: center; color: #dfe5ef; }
    .value { font-size: 80px; line-height: 76px; padding-top: 4px; font-weight: 700; }
    .label { font-size: 16px; line-height: 20px; }
  `;
  render() {
    return html`<div class="value">${this.value}</div><div class="label">${this.label}</div>`;
  }
}

/* ---------- Bar chart ---------- */

const PORTS = [
  { port: "23", color: "#54b399", value: 91, y: 483.3 },
  { port: "80", color: "#6092c0", value: 64, y: 502 },
  { port: "1723", color: "#d36086", value: 9, y: 520.7 },
  { port: "60871", color: "#9170b8", value: 23, y: 687.6 },
  { port: "52971", color: "#ca8eae", value: 22, y: 706.3 },
  { port: "52639", color: "#d6bf57", value: 4, y: 725 },
];

@customElement("bar-chart")
class BarChart extends LitElement {
  static styles = css`
    :host { display: flex; flex: 1; }
    .plot { flex: none; width: 809px; height: 386px; }
    .axis { fill: none; stroke: #292a2f; stroke-width: 2; }
    .tick { font-size: 10px; fill: #8a919f; text-anchor: middle; }
    .end { text-anchor: end; }
    .axis-title { font-size: 12px; font-weight: 700; fill: #d4dae5; text-anchor: middle; }
    .legend { display: flex; flex-direction: column; padding-top: 16.6px; }
    .item { display: flex; align-items: center; gap: 8px; height: 26px; font-size: 12px; color: #dfe5ef; }
    .dot { width: 8px; height: 8px; border-radius: 50%; }
  `;
  render() {
    const unit = 7.777;
    return html`
      <svg class="plot" viewBox="891 444 809 386">
        <path class="axis" d="M978 465V761.700M978 761.700H1685.700" />
        ${PORTS.map(
          (p) => svg`<rect x="978" y=${p.y} width=${p.value * unit} height="18.7" fill=${p.color} />`
        )}
        ${[0, 10, 20, 30, 40, 50, 60, 70, 80, 90].map(
          (v) => svg`<text class="tick" x=${978 + v * unit} y="790">${v}</text>`
        )}
        <text class="tick end" x="958" y="542">TCP</text>
        <text class="tick end" x="958" y="691">UDP</text>
        <text class="axis-title" x="1332" y="811.500">Count of records</text>
        <text class="axis-title" transform="translate(917 613.500) rotate(-90)">Top values of PROTO.keyword</text>
      </svg>
      <div class="legend">
        ${PORTS.map(
          (p) => html`<div class="item"><span class="dot" style="background:${p.color}"></span>${p.port}</div>`
        )}
      </div>
    `;
  }
}

/* ---------- Dashboard ---------- */

const CITIES = [
  ["Missing", "Missing", 204], ["Vrchlabi", "Trutnov District", 58], ["San Francisco", "California", 9],
  ["North Bergen", "New Jersey", 5], ["New York", "New York", 4], ["Nuremberg", "Bavaria", 4],
  ["San Antonio", "Texas", 4], ["San Mateo", "California", 4], ["Amsterdam", "North Holland", 3],
  ["Santa Clara", "California", 3],
];
const ADDRESSES = [
  ["218.63.72.113", 23, 87], ["109.183.177.6", 80, 58], ["157.240.19.19", 60871, 23], ["157.240.19.20", 52971, 22],
  ["23.2.28.95", 51841, 9], ["92.63.194.81", 1723, 5], ["92.63.194.35", 1723, 4], ["76.185.248.242", 52639, 4],
  ["23.2.28.95", 57350, 3], ["3.21.219.25", 52433, 2],
];

@customElement("app-root")
class AppRoot extends LitElement {
  static styles = css`
    :host {
      display: block;
      width: 100%;
      height: 839px;
      overflow: hidden;
      background: #1a1b20;
      font-family: ${FONT};
      letter-spacing: 0;
    }
    .grid {
      display: grid;
      grid-template-columns: 292px 329px 254px 891px;
      grid-template-rows: 412px 188px 216px;
      gap: 8px;
      margin: -1px 0 0 -9px;
    }
    .line { grid-column: 1 / 4; }
    .tall { grid-row: 2 / 4; }
    .low { grid-column: 3; grid-row: 3; }
    .ports { grid-column: 4; grid-row: 2 / 4; }
  `;
  render() {
    return html`
      <div class="grid">
        <dash-panel class="line" heading="Deny Line graph"><line-chart></line-chart></dash-panel>
        <dash-panel heading="Deny-Map"><deny-map></deny-map></dash-panel>
        <dash-panel class="tall" heading="Deny City Count">
          <count-table .columns=${["City", "Region", "Count"]} .rows=${CITIES} total="318"></count-table>
        </dash-panel>
        <dash-panel class="tall" heading="Deny IP-Port-Count">
          <count-table kind="ip" sorted="Count" .columns=${["IP Address", "IP Port", "Count"]} .rows=${ADDRESSES} total="416"></count-table>
        </dash-panel>
        <dash-panel heading="Deny Count"><big-metric value="434" label="Count"></big-metric></dash-panel>
        <dash-panel class="ports" heading="Deny-Protocol-Port"><bar-chart></bar-chart></dash-panel>
        <dash-panel class="low" heading="Deny-City-Count"><big-metric value="41" label="# Cities"></big-metric></dash-panel>
      </div>
    `;
  }
}
